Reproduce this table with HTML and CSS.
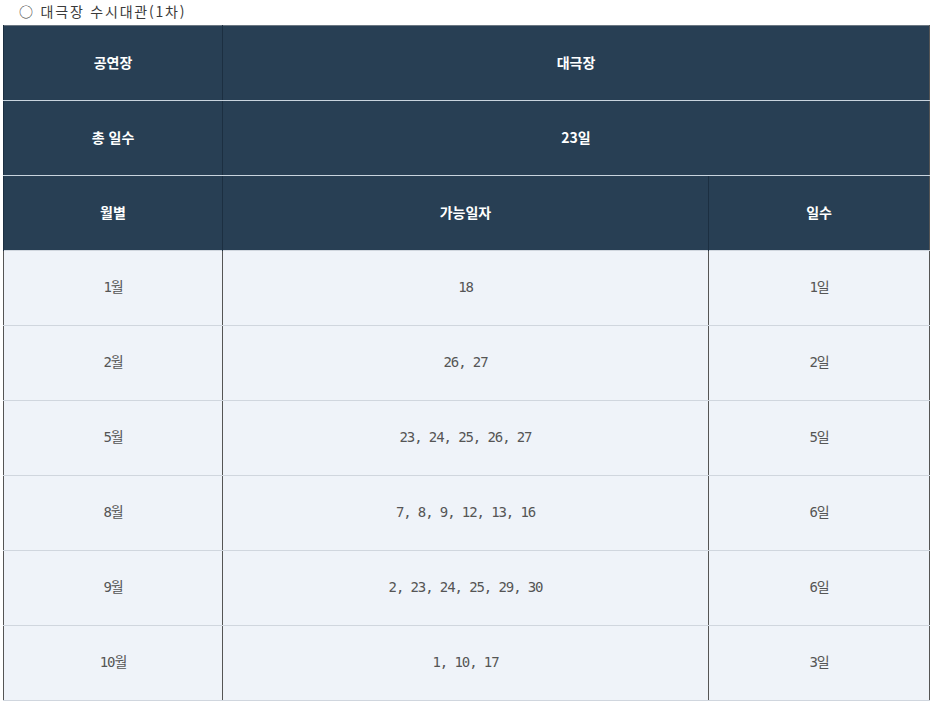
FILE: index.html
```html
<!DOCTYPE html>
<html lang="ko">
<head>
<meta charset="utf-8">
<link rel="stylesheet" href="styles.css">
</head>
<body>
<p class="title">○ 대극장 수시대관(1차)</p>
<table class="rent">
  <colgroup>
    <col class="c1"><col class="c2"><col class="c3">
  </colgroup>
  <thead>
    <tr><th>공연장</th><th colspan="2">대극장</th></tr>
    <tr><th>총 일수</th><th colspan="2">23일</th></tr>
    <tr><th>월별</th><th>가능일자</th><th>일수</th></tr>
  </thead>
  <tbody>
    <tr><td>1월</td><td>18</td><td>1일</td></tr>
    <tr><td>2월</td><td>26, 27</td><td>2일</td></tr>
    <tr><td>5월</td><td>23, 24, 25, 26, 27</td><td>5일</td></tr>
    <tr><td>8월</td><td>7, 8, 9, 12, 13, 16</td><td>6일</td></tr>
    <tr><td>9월</td><td>2, 23, 24, 25, 29, 30</td><td>6일</td></tr>
    <tr><td>10월</td><td>1, 10, 17</td><td>3일</td></tr>
  </tbody>
</table>
</body>
</html>
```
FILE: styles.css
```css
html, body {
  margin: 0;
  padding: 0;
  background: #ffffff;
}
body {
  padding: 0 3px;
  font-family: "Noto Sans CJK KR", "Liberation Sans", sans-serif;
  color: #333333;
  font-size: 14px;
}
.title {
  margin: 0;
  height: 25px;
  line-height: 23px;
  padding-left: 16px;
  font-size: 14px;
  letter-spacing: 1.8px;
  color: #3a3a3a;
}
.rent {
  width: 926px;
  border-collapse: collapse;
  table-layout: fixed;
  border-top: 1px solid #6b7782;
  border-left: 1px solid #555555;
  border-right: 1px solid #555555;
}
.c1 { width: 219px; }
.c2 { width: 486px; }
.c3 { width: 221px; }
.rent th {
  height: 72px;
  padding: 0 0 2px;
  background: #283f54;
  color: #ffffff;
  font-weight: bold;
  font-size: 14px;
  line-height: 20px;
  text-align: center;
  border-bottom: 1px solid #c9d4de;
  border-left: 1px solid #1c2f41;
}
.rent thead tr:last-child th {
  border-bottom: none;
}
.rent td {
  height: 71px;
  padding: 0 0 3px;
  background: #eff3f9;
  text-align: center;
  font-family: "DejaVu Sans Mono", "Noto Sans CJK KR", monospace;
  font-size: 14px;
  line-height: 20px;
  letter-spacing: -1.1px;
  color: #555555;
  border-top: 1px solid #d0d6de;
  border-bottom: 1px solid #d0d6de;
  border-left: 1px solid #555555;
}
```
